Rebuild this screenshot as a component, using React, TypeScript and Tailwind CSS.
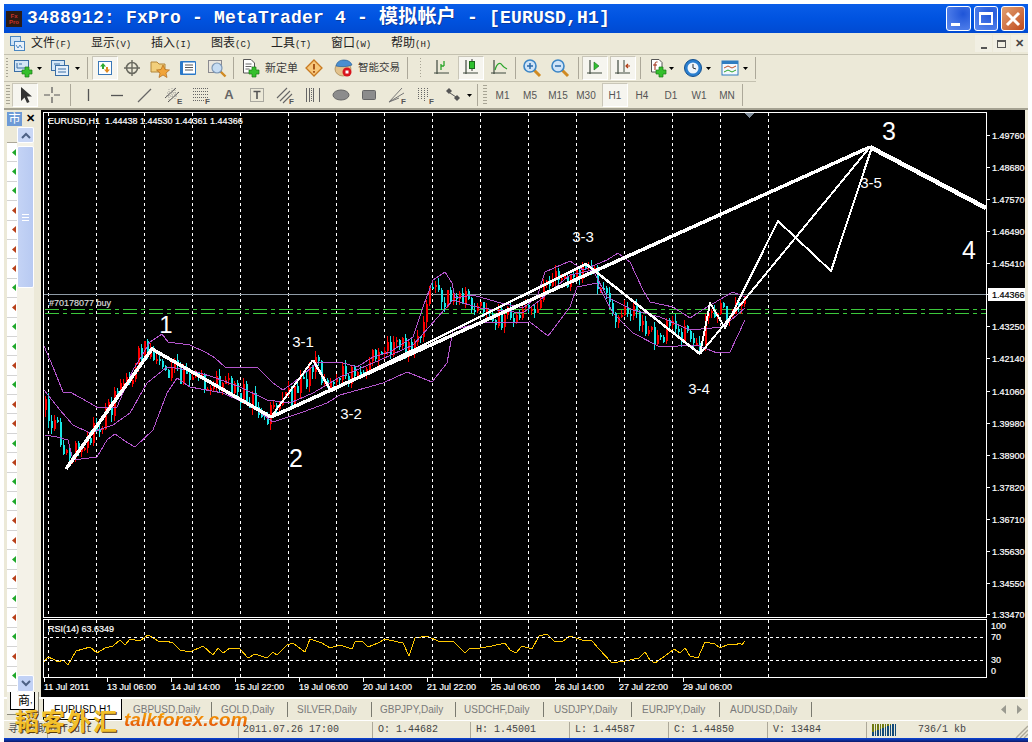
import type { ReactNode } from "react";

type Pt = [number, number];

const toPoints = (pts: Pt[]) => pts.map((p) => p.join(",")).join(" ");

const anchors: Pt[] = [
  [45, 410], [55, 425], [66, 458], [80, 440], [100, 425], [115, 400], [130, 380], [140, 352], [152, 350],
  [165, 365], [180, 375], [190, 385], [210, 378], [230, 385], [250, 400], [270, 415], [285, 400], [300, 385],
  [313, 365], [325, 380], [340, 378], [360, 365], [390, 350], [410, 345], [418, 335], [425, 305], [432, 292],
  [445, 300], [455, 305], [465, 300], [480, 312], [500, 318], [520, 316], [535, 312], [550, 278], [570, 285],
  [586, 272], [600, 280], [610, 310], [625, 315], [640, 318], [655, 342], [670, 325], [690, 340], [700, 350],
  [708, 310], [720, 312], [735, 310], [745, 295],
];

const upperBand: Pt[] = [
  [44, 346], [53, 367], [63, 392], [70, 392], [90, 403], [98, 408], [117, 407], [133, 370], [150, 342], [162, 334],
  [168, 342], [190, 345], [207, 353], [215, 358], [225, 367], [240, 368], [257, 367], [273, 383], [283, 390],
  [293, 383], [317, 363], [340, 362], [357, 367], [373, 357], [390, 352], [413, 337], [423, 307], [433, 280],
  [445, 272], [452, 283], [455, 298], [473, 295], [497, 302], [523, 308], [537, 297], [545, 272], [570, 261],
  [583, 270], [607, 260], [618, 253], [630, 262], [643, 290], [650, 302], [673, 307], [690, 318], [707, 307],
  [733, 292], [745, 297],
];

const midBand: Pt[] = [
  [44, 390], [60, 410], [73, 425], [90, 433], [113, 425], [130, 413], [147, 383], [167, 367], [190, 370], [213, 377],
  [240, 387], [267, 400], [290, 403], [313, 393], [340, 377], [380, 360], [413, 345], [453, 300], [480, 308],
  [523, 313], [540, 300], [570, 275], [593, 270], [607, 297], [633, 310], [660, 317], [690, 330], [723, 327], [745, 308],
];

const lowerBand: Pt[] = [
  [45, 435], [57, 437], [68, 440], [73, 460], [97, 457], [107, 440], [115, 434], [128, 443], [135, 447], [153, 430],
  [167, 393], [177, 378], [190, 387], [223, 393], [253, 407], [273, 422], [303, 412], [327, 403], [340, 395],
  [383, 383], [407, 372], [432, 382], [447, 363], [453, 330], [480, 323], [530, 322], [548, 336], [570, 307],
  [577, 287], [597, 283], [613, 313], [633, 333], [660, 347], [697, 345], [717, 353], [730, 352], [745, 320],
];

const rsiLine: Pt[] = [
  [44, 662], [48, 657], [53, 659], [58, 662], [63, 660], [68, 665], [76, 651], [90, 647], [97, 653], [105, 648], [113, 646],
  [120, 640], [125, 645], [130, 639], [140, 641], [148, 635], [160, 642], [166, 641], [173, 643], [180, 650], [190, 652],
  [203, 646], [213, 655], [218, 648], [223, 653], [230, 648], [240, 649], [248, 658], [255, 654], [267, 658], [273, 652],
  [277, 655], [287, 645], [293, 643], [305, 652], [310, 639], [322, 643], [330, 648], [340, 645], [352, 649], [355, 642],
  [362, 641], [368, 647], [378, 643], [385, 639], [398, 642], [403, 643], [409, 656], [415, 638], [427, 636], [440, 642],
  [453, 641], [465, 653], [470, 648], [480, 648], [492, 646], [505, 643], [510, 650], [516, 653], [522, 646], [532, 649],
  [539, 636], [547, 634], [554, 641], [562, 642], [570, 636], [582, 640], [592, 641], [599, 649], [612, 663], [625, 661],
  [639, 658], [645, 652], [650, 660], [655, 663], [669, 653], [674, 649], [680, 653], [685, 648], [690, 656], [698, 658],
  [705, 642], [715, 644], [720, 648], [729, 644], [735, 645], [740, 643], [742, 645], [745, 641],
];

const priceLabels: [string, number][] = [
  ["1.49760", 135], ["1.48680", 167], ["1.47570", 199], ["1.46490", 231], ["1.45410", 263], ["1.43250", 326],
  ["1.42140", 358], ["1.41060", 391], ["1.39980", 423], ["1.38900", 455], ["1.37820", 487], ["1.36710", 519],
  ["1.35630", 551], ["1.34550", 583], ["1.33470", 614],
];

const timeLabels: [string, number][] = [
  ["11 Jul 2011", 44], ["13 Jul 06:00", 107], ["14 Jul 14:00", 171], ["15 Jul 22:00", 235], ["19 Jul 06:00", 299],
  ["20 Jul 14:00", 363], ["21 Jul 22:00", 427], ["25 Jul 06:00", 491], ["26 Jul 14:00", 555], ["27 Jul 22:00", 619],
  ["29 Jul 06:00", 683],
];

const waveLabels: [string, number, number, number][] = [
  ["1", 166, 333, 24], ["2", 296, 467, 25], ["3", 889, 140, 25], ["4", 969, 259, 25], ["3-1", 303, 347, 15],
  ["3-2", 351, 419, 15], ["3-3", 583, 242, 15], ["3-4", 699, 394, 15], ["3-5", 871, 188, 15],
];

const gridX = Array.from({ length: 16 }, (_, i) => 48.5 + i * 48);

function anchorAt(x: number) {
  for (let i = 1; i < anchors.length; i++) {
    if (x <= anchors[i][0]) {
      const [x0, y0] = anchors[i - 1];
      const [x1, y1] = anchors[i];
      return y0 + ((y1 - y0) * (x - x0)) / (x1 - x0);
    }
  }
  return anchors[anchors.length - 1][1];
}

function buildBars() {
  let seed = 41;
  const rnd = () => {
    seed = (seed * 16807) % 2147483647;
    return seed / 2147483647;
  };
  const bars = [];
  let open = anchorAt(45);
  for (let x = 45; x <= 745; x += 3) {
    const close = anchorAt(x) + (rnd() - 0.5) * 22;
    const top = Math.min(open, close);
    const bottom = Math.max(open, close);
    bars.push({
      x,
      top: Math.round(top),
      height: Math.max(2, Math.round(bottom - top)),
      wickTop: Math.round(top - rnd() * 7),
      wickBottom: Math.round(bottom + rnd() * 7),
      up: close < open,
    });
    open = close;
  }
  return bars;
}

const bars = buildBars();

function Chart() {
  return (
    <svg width={984} height={587} viewBox="41 110 984 587" className="block" shapeRendering="crispEdges">
      <rect x={41} y={110} width={984} height={587} fill="#000" />
      <rect x={43.5} y={112.5} width={943} height={505} fill="none" stroke="#fff" />
      <rect x={43.5} y={619.5} width={943} height={58} fill="none" stroke="#fff" />

      {gridX.map((x) => (
        <g key={x}>
          <line x1={x} x2={x} y1={113} y2={617} stroke="#fff" strokeDasharray="3 3" />
          <line x1={x} x2={x} y1={620} y2={677} stroke="#fff" strokeDasharray="3 3" />
        </g>
      ))}

      <line x1={44} x2={986} y1={294.5} y2={294.5} stroke="#8f9ba6" />
      <line x1={45} x2={986} y1={309.5} y2={309.5} stroke="#3cc83c" strokeDasharray="14 4 4 4" />
      <line x1={45} x2={986} y1={313.5} y2={313.5} stroke="#3cc83c" strokeDasharray="14 4 4 4" />
      <polygon points="744,113 754,113 749,118" fill="#7f8c99" />

      {bars.map((b) => (
        <g key={b.x} fill={b.up ? "#ff0000" : "#19e6e6"}>
          <rect x={b.x} y={b.wickTop} width={1} height={b.wickBottom - b.wickTop} />
          <rect x={b.x} y={b.top} width={2} height={b.height} />
        </g>
      ))}

      <g fill="none" stroke="#b455cc">
        <polyline points={toPoints(upperBand)} />
        <polyline points={toPoints(midBand)} />
        <polyline points={toPoints(lowerBand)} />
      </g>

      <g fill="none" stroke="#fff" strokeLinejoin="round">
        <polyline points="66,469 152,349 271,417" strokeWidth={3.5} />
        <polyline points="271,417 870,147" strokeWidth={3.5} />
        <polyline points="870,147 986,208" strokeWidth={4.5} />
        <polyline points="271,417 313,360" strokeWidth={2} />
        <polyline points="313,360 331,391 586,264 700,354" strokeWidth={2.5} />
        <polyline points="700,354 710,303 725,328 778,221 831,271 872,147" strokeWidth={2} />
        <polyline points="700,354 870,147" strokeWidth={2} />
      </g>

      <polyline points={toPoints(rsiLine)} fill="none" stroke="#ffc800" />

      <line x1={44} x2={986} y1={637.5} y2={637.5} stroke="#fff" strokeDasharray="3 3" />
      <line x1={44} x2={986} y1={660.5} y2={660.5} stroke="#fff" strokeDasharray="3 3" />

      <g fill="#fff" stroke="#fff" strokeWidth={0.2} fontSize={9} shapeRendering="auto">
        <text x={48} y={124}>EURUSD,H1&#160;&#160;1.44438 1.44530 1.44361 1.44366</text>
        <text x={49} y={306} fill="#d8d8d8" stroke="#d8d8d8">#70178077 buy</text>
        <text x={48} y={632}>RSI(14) 63.6349</text>
        {priceLabels.map(([label, y]) => (
          <g key={label}>
            <text x={992} y={y + 3.5}>{label}</text>
            <rect x={986} y={y} width={4} height={1} stroke="none" />
          </g>
        ))}
        <rect x={988} y={288} width={37} height={13} stroke="none" />
        <rect x={986} y={294} width={4} height={1} stroke="none" />
        <text x={992} y={297.5} fill="#000" stroke="#000">1.44366</text>
        <text x={991} y={629}>100</text>
        <text x={991} y={640}>70</text>
        <text x={991} y={663}>30</text>
        <text x={991} y={674}>0</text>
        {timeLabels.map(([label, x]) => (
          <g key={label}>
            <text x={x} y={690}>{label}</text>
            <rect x={x} y={678} width={1} height={4} stroke="none" />
          </g>
        ))}
      </g>

      <g fill="#fff" textAnchor="middle" shapeRendering="auto">
        {waveLabels.map(([label, x, y, size]) => (
          <text key={label} x={x} y={y} fontSize={size}>{label}</text>
        ))}
      </g>
    </svg>
  );
}

function Cell({ className = "", children }: { className?: string; children?: ReactNode }) {
  return <div className={`flex h-full shrink-0 items-center justify-center ${className}`}>{children}</div>;
}

function Pressed({ className = "", children }: { className?: string; children: ReactNode }) {
  return (
    <div className={`flex h-[24px] w-[26px] shrink-0 items-center justify-center border border-[#c9c6b8] border-r-white border-b-white bg-[#f6f5ef] ${className}`}>
      {children}
    </div>
  );
}

function Sep({ className = "" }: { className?: string }) {
  return <div className={`h-[22px] w-px shrink-0 bg-[#aca899] ${className}`} />;
}

function Grip({ className = "" }: { className?: string }) {
  return <div className={`h-[20px] shrink-0 border-x-2 border-transparent bg-[repeating-linear-gradient(to_bottom,#a8a595_0,#a8a595_1px,transparent_1px,transparent_3px)] bg-clip-content ${className}`} />;
}

function Drop({ className = "" }: { className?: string }) {
  return (
    <Cell className={className}>
      <svg width={5} height={3} viewBox="0 0 5 3"><polygon points="0,0 5,0 2.5,3" fill="#000" /></svg>
    </Cell>
  );
}

function Ico({ w = 20, h = 20, children }: { w?: number; h?: number; children: ReactNode }) {
  return <svg width={w} height={h} viewBox={`0 0 ${w} ${h}`}>{children}</svg>;
}

function GreenPlus({ x, y }: { x: number; y: number }) {
  return <path d={`M${x + 3} ${y}h4v3h3v4h-3v3h-4v-3h-3v-4h3z`} fill="#35c02c" stroke="#1c7a18" strokeWidth={0.7} />;
}

const Axes = () => <path d="M5 2V16M2 15H17" stroke="#3f4a3f" strokeWidth={1.2} fill="none" />;

function Magnifier({ sign }: { sign: "+" | "-" }) {
  return (
    <Ico>
      <path d="M12 12L18 18" stroke="#d08a22" strokeWidth={3} />
      <circle cx={8} cy={8} r={6} fill="#cfe4f8" stroke="#3c86c6" strokeWidth={1.6} />
      <path d={sign === "+" ? "M5 8H11M8 5V11" : "M5 8H11"} stroke="#2b6aa8" strokeWidth={1.5} />
    </Ico>
  );
}

function Toolbar1() {
  return (
    <div className="flex h-[28px] border-t border-[#c4c1b0] bg-[#ece9d8]">
      <div className="flex h-full w-[752px] items-center border-b border-[#c4c1b0]">
        <Grip className="w-[6px]" />
        <Cell className="w-[26px]">
          <Ico>
            <rect x={1.5} y={2.5} width={14} height={11} fill="#d4e6f6" stroke="#3a6ea5" />
            <path d="M4 5V10H12M6 6h3" stroke="#3a6ea5" fill="none" />
            <GreenPlus x={9} y={9} />
          </Ico>
        </Cell>
        <Drop className="w-[7px]" />
        <Cell className="ml-[3px] w-[28px]">
          <Ico>
            <rect x={1.5} y={2.5} width={13} height={10} fill="#d4e6f6" stroke="#3a6ea5" />
            <rect x={5.5} y={7.5} width={13} height={10} fill="#e6f0fa" stroke="#3a6ea5" />
            <path d="M8 11H16M8 14H16M4 6h6" stroke="#3a6ea5" />
          </Ico>
        </Cell>
        <Drop className="w-[6px]" />
        <Sep className="ml-[7px]" />
        <Pressed className="ml-[4px]">
          <Ico w={16} h={16}>
            <rect x={1.5} y={1.5} width={13} height={13} fill="#fff" stroke="#3a78b8" />
            <path d="M6 3L9 6.5H7V9H5V6.5H3z" fill="#2faa2f" />
            <path d="M10 13L7 9.5H9V7H11V9.5H13z" fill="#e08a20" />
          </Ico>
        </Pressed>
        <Cell className="w-[28px]">
          <Ico>
            <circle cx={10} cy={10} r={5.5} fill="none" stroke="#6a6a60" strokeWidth={1.6} />
            <path d="M10 2V18M2 10H18" stroke="#6a6a60" strokeWidth={1.4} />
          </Ico>
        </Cell>
        <Cell className="w-[28px]">
          <Ico>
            <path d="M1 4H7L9 6H15V14H1z" fill="#f2cf7c" stroke="#b4873a" />
            <path d="M13 7L15 11.5L19.5 12L16 15L17 19.5L13 17L9 19.5L10 15L6.5 12L11 11.5z" fill="#f0a43a" stroke="#b06a1c" strokeWidth={0.7} />
          </Ico>
        </Cell>
        <Cell className="w-[28px]">
          <Ico>
            <rect x={2} y={3} width={16} height={14} rx={1} fill="#2a78c8" />
            <rect x={5} y={4.5} width={12} height={11} fill="#fff" />
            <path d="M7 7H15M7 9.5H15M7 12H15" stroke="#555" />
          </Ico>
        </Cell>
        <Cell className="ml-px w-[28px]">
          <Ico>
            <rect x={1.5} y={2.5} width={13} height={12} fill="#e9e6df" stroke="#8a8a90" />
            <circle cx={10} cy={10} r={5} fill="#c6dcf3" stroke="#7e98b6" strokeWidth={1.2} />
            <path d="M14 14L18.5 18.5" stroke="#d08a22" strokeWidth={2.4} />
          </Ico>
        </Cell>
        <Sep className="ml-[2px]" />
        <Cell className="w-[31px]">
          <Ico>
            <path d="M3.5 1.5H11L14.5 5V15H3.5z" fill="#fff" stroke="#555" />
            <path d="M5.5 6h6M5.5 8.5h6M5.5 11h4" stroke="#666" />
            <GreenPlus x={9} y={9} />
          </Ico>
        </Cell>
        <Cell className="w-[35px] justify-start whitespace-nowrap text-[11px] text-[#3c3c3c]">新定单</Cell>
        <Cell className="w-[28px]">
          <Ico>
            <path d="M10 2L18 10L10 18L2 10z" fill="#f7c77a" stroke="#c87a20" strokeWidth={1.3} />
            <path d="M10 6V11.5M10 13V14.8" stroke="#a04c10" strokeWidth={1.8} />
          </Ico>
        </Cell>
        <Cell className="ml-px w-[28px]">
          <Ico>
            <ellipse cx={10} cy={11} rx={8} ry={7} fill="#e3c28c" stroke="#a0814a" strokeWidth={0.7} />
            <path d="M3 8C4 3 8 2 11 2C15 2 18 4 19 7C14 9 8 9 3 8z" fill="#4a8ed0" stroke="#2c6196" strokeWidth={0.7} />
            <circle cx={14} cy={14} r={4.5} fill="#d8141c" />
            <rect x={12.5} y={12.5} width={3} height={3} fill="#fff" />
          </Ico>
        </Cell>
        <Cell className="ml-px w-[43px] justify-start whitespace-nowrap text-[10.5px] text-[#3c3c3c]">智能交易</Cell>
        <Sep className="ml-[6px]" />
        <Grip className="ml-[10px] w-[5px]" />
        <Cell className="ml-[6px] w-[26px]">
          <Ico>
            <Axes />
            <path d="M9 12V6M9 8H12M12 3V8" stroke="#2aa52a" strokeWidth={1.3} fill="none" />
          </Ico>
        </Cell>
        <Pressed className="ml-[3px]">
          <Ico>
            <Axes />
            <path d="M11 1V13" stroke="#333" />
            <rect x={8.5} y={3.5} width={5} height={7} fill="#2fc02f" stroke="#1c6a1c" />
          </Ico>
        </Pressed>
        <Cell className="ml-px w-[28px]">
          <Ico>
            <Axes />
            <path d="M6 12C8 5 11 4 13 7C14 9 16 10 18 11" stroke="#2aa52a" strokeWidth={1.3} fill="none" />
          </Ico>
        </Cell>
        <Sep className="ml-[2px]" />
        <Cell className="ml-[2px] w-[28px]"><Magnifier sign="+" /></Cell>
        <Cell className="w-[28px]"><Magnifier sign="-" /></Cell>
        <Sep className="ml-[4px]" />
        <Pressed className="ml-[3px]">
          <Ico>
            <Axes />
            <polygon points="9,4 14,8 9,12" fill="#2fc02f" stroke="#1c6a1c" strokeWidth={0.6} />
          </Ico>
        </Pressed>
        <Pressed className="ml-[2px]">
          <Ico>
            <Axes />
            <path d="M11 2V14" stroke="#3f4a3f" />
            <path d="M17 8H13M15 6L13 8L15 10" stroke="#b03a10" strokeWidth={1.2} fill="none" />
          </Ico>
        </Pressed>
        <Sep className="ml-[4px]" />
        <Cell className="ml-[4px] w-[24px]">
          <Ico>
            <path d="M4.5 1.5H12L15 4.5V14H4.5z" fill="#fff" stroke="#555" />
            <path d="M8 12V6C8 4 9 4 10.5 4M6 7H10" stroke="#a02a10" fill="none" />
            <GreenPlus x={9} y={9} />
          </Ico>
        </Cell>
        <Drop className="w-[5px]" />
        <Cell className="ml-[7px] w-[24px]">
          <Ico>
            <circle cx={10} cy={10} r={8.5} fill="#2a7fd0" stroke="#14508e" />
            <circle cx={10} cy={10} r={5.5} fill="#eef5fb" />
            <path d="M10 6V10L13 11" stroke="#333" fill="none" />
          </Ico>
        </Cell>
        <Drop className="w-[6px]" />
        <Cell className="ml-[7px] w-[24px]">
          <Ico>
            <rect x={2} y={3} width={16} height={14} fill="#f4f8fc" stroke="#2f7cc0" />
            <rect x={2} y={3} width={16} height={3} fill="#2f7cc0" />
            <path d="M4 10L8 8L12 10L16 8" stroke="#c0502a" fill="none" />
            <path d="M4 14L8 12L12 14L16 12" stroke="#2aa52a" fill="none" />
          </Ico>
        </Cell>
        <Drop className="w-[6px]" />
        <Sep className="ml-[7px]" />
      </div>
    </div>
  );
}

function LetterF({ label = "F" }: { label?: string }) {
  return <text x={14} y={19} fontSize={8} fontWeight={700} fill="#555">{label}</text>;
}

function Toolbar2() {
  const periods = ["M1", "M5", "M15", "M30"];
  return (
    <div className="flex h-[28px] items-center border-b-2 border-[#a5a292] bg-[#ece9d8]">
      <Grip className="w-[8px]" />
      <Pressed>
        <Ico w={16} h={18}>
          <path d="M4 1V15L7.5 11.5L10 17L12.5 16L10 10.5H15z" fill="#333" />
        </Ico>
      </Pressed>
      <Cell className="w-[28px]">
        <Ico><path d="M10 2V8M10 12V18M2 10H8M12 10H18" stroke="#555" strokeWidth={1.2} /></Ico>
      </Cell>
      <Sep className="ml-[4px]" />
      <Cell className="ml-[3px] w-[28px]"><Ico><path d="M10.5 4V16" stroke="#555" strokeWidth={1.3} /></Ico></Cell>
      <Cell className="ml-px w-[28px]"><Ico><path d="M4 10.5H16" stroke="#555" strokeWidth={1.3} /></Ico></Cell>
      <Cell className="w-[28px]"><Ico><path d="M3 17L16 4" stroke="#666" strokeWidth={1.2} /></Ico></Cell>
      <Cell className="w-[28px]">
        <Ico>
          <path d="M2 13L13 3M5 17L16 7" stroke="#555" />
          <path d="M4 8H15M3 11H14M6 4V16M9 3V15M12 3V14" stroke="#888" strokeWidth={0.7} strokeDasharray="1 1" />
          <LetterF label="E" />
        </Ico>
      </Cell>
      <Cell className="w-[28px]">
        <Ico>
          <path d="M2 3.5H17M2 6.5H17M2 9.5H17M2 12.5H17M2 15.5H13" stroke="#666" strokeDasharray="1 1" />
          <LetterF />
        </Ico>
      </Cell>
      <Cell className="w-[28px] text-[13px] font-bold text-[#666]">A</Cell>
      <Cell className="w-[28px]">
        <Ico>
          <rect x={3.5} y={3.5} width={13} height={13} fill="none" stroke="#666" strokeDasharray="1 1" />
          <path d="M6.5 6.5H13.5M10 6.5V14" stroke="#555" strokeWidth={1.6} />
        </Ico>
      </Cell>
      <Cell className="w-[28px]">
        <Ico>
          <path d="M2 13L12 3M5 16L15 6M8 18L17 9" stroke="#666" strokeWidth={1.1} />
          <LetterF />
        </Ico>
      </Cell>
      <Cell className="w-[28px]">
        <Ico><path d="M3.5 3V17M6.5 3V17M10.5 3V17M16.5 3V17" stroke="#666" /><path d="M8.5 3V17" stroke="#666" strokeDasharray="1 1" /></Ico>
      </Cell>
      <Cell className="w-[28px]"><Ico><ellipse cx={10} cy={10} rx={8} ry={5} fill="#8c8c8c" stroke="#666" /></Ico></Cell>
      <Cell className="w-[28px]"><Ico><rect x={3.5} y={5.5} width={13} height={9} rx={1} fill="#8c8c8c" stroke="#666" /></Ico></Cell>
      <Cell className="w-[28px]">
        <Ico>
          <path d="M2 17L15 3M2 17L17 8M2 17L12 13" stroke="#777" />
          <LetterF />
        </Ico>
      </Cell>
      <Cell className="w-[28px]">
        <Ico>
          <path d="M3.5 3V14M6.5 3V14M9.5 3V17M12.5 3V12" stroke="#666" strokeDasharray="1 1" />
          <LetterF />
        </Ico>
      </Cell>
      <Cell className="w-[28px]">
        <Ico>
          <path d="M3 6L6 3L9 6L6 9z" fill="#555" />
          <path d="M7 8L13 12" stroke="#555" />
          <path d="M11 13L14 10L17 13L14 16z" fill="#555" />
        </Ico>
      </Cell>
      <Drop className="w-[5px]" />
      <Sep className="ml-[5px]" />
      <Grip className="ml-[3px] w-[8px]" />
      {periods.map((p, i) => (
        <Cell key={p} className={i === 0 ? "w-[27px] text-[10px] text-[#555]" : "w-[28px] text-[10px] text-[#555]"}>{p}</Cell>
      ))}
      <Pressed className="ml-[2px] text-[10px] text-[#555]">H1</Pressed>
      <Cell className="w-[28px] text-[10px] text-[#555]">H4</Cell>
      <Cell className="ml-px w-[28px] text-[10px] text-[#555]">D1</Cell>
      <Cell className="w-[28px] text-[10px] text-[#555]">W1</Cell>
      <Cell className="w-[28px] text-[10px] text-[#555]">MN</Cell>
      <Sep className="ml-px" />
    </div>
  );
}

const listIcons = "gggrrrrgrggrgrrgrggrrgrgrgrgg".split("");

function ScrollChevron({ down = false }: { down?: boolean }) {
  return (
    <svg width={10} height={7} viewBox="0 0 10 7">
      <path d={down ? "M1 1L5 5L9 1" : "M1 6L5 2L9 6"} stroke="#4d6185" strokeWidth={2} fill="none" />
    </svg>
  );
}

function LeftPanel() {
  return (
    <div className="relative flex w-[37px] shrink-0 flex-col bg-[#ece9d8]">
      <div className="flex h-[17px] shrink-0 items-center pl-[3px]">
        <div className="flex h-[14px] w-[15px] items-center justify-center bg-[#6d9ad6] text-[12px] leading-none text-white">市</div>
        <span className="ml-[4px] text-[11px] font-bold leading-none text-black">✕</span>
      </div>
      <div className="ml-[3px] flex min-h-0 flex-1">
        <div className="h-[565px] w-[10px] overflow-hidden bg-white">
          <div className="h-[16px] border-b border-[#aca899] bg-[#ece9d8]" />
          {listIcons.map((c, i) => (
            <div key={i} className="flex h-[19.4px] items-center justify-end border-b border-[#d4d4d4] pr-[1px]">
              <svg width={5} height={9} viewBox="0 0 5 9">
                <path d="M5 1L1 4.5L5 8z" fill={c === "g" ? "#1fa82a" : "#b8401a"} />
              </svg>
            </div>
          ))}
        </div>
        <div className="flex h-[565px] w-[17px] flex-col bg-[#f4f2e8]">
          <div className="flex h-[16px] shrink-0 items-center justify-center rounded-[2px] border border-white bg-[#c9d7f6]">
            <ScrollChevron />
          </div>
          <div className="mt-[3px] flex h-[142px] shrink-0 items-center justify-center rounded-[2px] border border-white bg-gradient-to-r from-[#c4d3f5] to-[#b8caf2]">
            <div className="h-[7px] w-[7px] border-y border-white bg-[linear-gradient(to_bottom,transparent_2px,#fff_2px,#fff_3px,transparent_3px)]" />
          </div>
          <div className="mt-auto flex h-[17px] shrink-0 items-center justify-center rounded-[2px] border border-white bg-[#c2d2f5]">
            <ScrollChevron down />
          </div>
        </div>
      </div>
      {/* active tab of the panel, hangs below over the tab bar */}
      <div className="absolute left-[3px] top-[582px] z-10 flex h-[23px] w-[32px] items-start border-b border-r border-[#8c8a7c] bg-[#f2f0e4] pl-[3px]">
        <div className="flex h-[18px] w-[25px] items-center overflow-hidden border-x border-b border-black bg-white pl-[7px] text-[12px] leading-none text-black">
          商<span className="text-[9px]">,</span>
        </div>
      </div>
    </div>
  );
}

const chartTabs: [string, string][] = [
  ["GBPUSD,Daily", "w-[90px] pl-[11px]"],
  ["GOLD,Daily", "w-[76px] pl-[9px]"],
  ["SILVER,Daily", "w-[84px] pl-[9px]"],
  ["GBPJPY,Daily", "w-[84px] pl-[8px]"],
  ["USDCHF,Daily", "w-[88px] pl-[8px]"],
  ["USDJPY,Daily", "w-[88px] pl-[10px]"],
  ["EURJPY,Daily", "w-[88px] pl-[10px]"],
  ["AUDUSD,Daily", "w-[92px] pl-[10px]"],
];

const statusCells: [string, string][] = [
  ["寻求帮助", "w-[44px] pl-[4px]"],
  ["Default", "w-[191px] pl-[2px]"],
  ["2011.07.26 17:00", "w-[134px] pl-[4px]"],
  ["O: 1.44682", "w-[98px] pl-[5px]"],
  ["H: 1.45001", "w-[99px] pl-[5px]"],
  ["L: 1.44587", "w-[99px] pl-[5px]"],
  ["C: 1.44850", "w-[99px] pl-[5px]"],
  ["V: 13484", "w-[99px] pl-[5px]"],
];

const signalBars = [4, 5, 6, 7, 8, 9, 10, 11, 12, 12];

export default function App() {
  return (
    <div className="relative flex h-[742px] w-[1032px] flex-col overflow-hidden bg-white pt-[4px] pl-[4px] pr-[4px] font-['Liberation_Sans','Noto_Sans_CJK_SC',sans-serif]">
      {/* title bar */}
      <div className="flex h-[29px] shrink-0 items-center bg-gradient-to-b from-[#0a5de8] via-[#0053e0] to-[#004ad2]">
        <div className="ml-[2px] flex h-[16px] w-[16px] shrink-0 flex-col items-center justify-center bg-[#2a1a14] text-[6px] font-bold leading-[6px] text-[#c8322a]">
          <span>Fx</span>
          <span>Pro</span>
        </div>
        <div className="ml-[5px] whitespace-pre font-['Liberation_Mono','Noto_Sans_CJK_SC',monospace] text-[18px] font-bold tracking-[0.2px] text-white [text-shadow:1px_1px_0_#0f3a9a]">
          3488912: FxPro - MetaTrader 4 - <span className="text-[19px]">模拟帐户</span> - [EURUSD,H1]
        </div>
        <div className="ml-auto mr-[3px] flex h-[25px] gap-[3px]">
          <div className="flex w-[25px] items-end rounded-[3px] border border-white bg-[radial-gradient(circle_at_70%_30%,#1f55d8,#5f8cf0)] px-[4px] pb-[4px]">
            <div className="h-[3px] w-[9px] bg-white" />
          </div>
          <div className="flex w-[24px] items-center justify-center rounded-[3px] border border-white bg-[radial-gradient(circle_at_70%_30%,#1f55d8,#5f8cf0)]">
            <div className="h-[13px] w-[14px] border-2 border-t-[3px] border-white" />
          </div>
          <div className="flex w-[24px] items-center justify-center rounded-[3px] border border-white bg-gradient-to-br from-[#e0a070] to-[#bf4a1c]">
            <svg width={16} height={16} viewBox="0 0 16 16">
              <path d="M2 2L14 14M14 2L2 14" stroke="#fff" strokeWidth={3} />
            </svg>
          </div>
        </div>
      </div>

      {/* menu */}
      <div className="flex h-[21px] shrink-0 items-center bg-[#ece9d8] text-[12px] text-[#222]">
        <div className="flex w-[27px] shrink-0 justify-center">
          <svg width={15} height={15} viewBox="0 0 15 15">
            <rect x={0.5} y={0.5} width={10} height={9} fill="#cfe3f5" stroke="#4a86c0" />
            <rect x={4.5} y={5.5} width={10} height={9} fill="#e8f1fa" stroke="#4a86c0" />
            <path d="M6 9L8 12L10 9L12 12" stroke="#4a86c0" fill="none" />
          </svg>
        </div>
        {["文件(F)", "显示(V)", "插入(I)", "图表(C)", "工具(T)", "窗口(W)", "帮助(H)"].map((m) => (
          <span key={m} className="w-[60px] shrink-0">
            {m.slice(0, 2)}
            <span className="font-['Liberation_Mono',monospace] text-[9px]">{m.slice(2)}</span>
          </span>
        ))}
        <div className="ml-auto flex h-[17px] gap-px">
          <div className="flex w-[17px] items-end justify-center bg-[#f1efe3] pb-[3px]"><div className="h-[2px] w-[6px] bg-[#555]" /></div>
          <div className="flex w-[17px] items-center justify-center bg-[#f1efe3]"><div className="h-[8px] w-[9px] border border-t-2 border-[#555]" /></div>
          <div className="flex w-[17px] items-center justify-center bg-[#f1efe3] text-[11px] font-bold leading-none text-[#444]">✕</div>
        </div>
      </div>

      <Toolbar1 />
      <Toolbar2 />

      {/* chart + side panel */}
      <div className="flex h-[587px] shrink-0 bg-[#ece9d8]">
        <LeftPanel />
        <Chart />
      </div>

      {/* chart tabs */}
      <div className="flex h-[23px] shrink-0 items-center border-t-2 border-white bg-[#ece9d8] text-[10px] text-[#7a7a7a]">
        <div className="ml-[39px] flex h-full w-[79px] shrink-0 items-center border-x border-b border-black bg-white pl-[10px] text-black">EURUSD,H1</div>
        {chartTabs.map(([label, cls]) => (
          <div key={label} className={`flex h-[15px] shrink-0 items-center border-r border-[#7a7a70] ${cls}`}>{label}</div>
        ))}
        <div className="ml-auto mr-[6px] flex gap-[11px]">
          <svg width={5} height={9} viewBox="0 0 5 9"><polygon points="5,0 0,4.5 5,9" fill="#9a9a90" /></svg>
          <svg width={5} height={9} viewBox="0 0 5 9"><polygon points="0,0 5,4.5 0,9" fill="#9a9a90" /></svg>
        </div>
      </div>

      {/* status bar */}
      <div className="flex h-[18px] shrink-0 items-center border-t border-white bg-[#ece9d8] font-['Liberation_Mono','Noto_Sans_CJK_SC',monospace] text-[10px] text-[#444]">
        {statusCells.map(([label, cls]) => (
          <div key={label} className={`flex h-[16px] shrink-0 items-center overflow-hidden whitespace-nowrap border-r border-[#aca899] ${cls}`}>{label}</div>
        ))}
        <div className="ml-[5px] flex h-[12px] w-[24px] shrink-0 items-end gap-px">
          {signalBars.map((h, i) => (
            <div key={i} className="flex h-full w-[1.5px] flex-col justify-end bg-[#6e7a10]">
              <div className="bg-[#124a78]" style={{ height: h }} />
            </div>
          ))}
        </div>
        <span className="ml-[22px]">736/1 kb</span>
        <svg width={13} height={13} viewBox="0 0 13 13" className="ml-auto self-end">
          <path d="M13 1L1 13M13 5L5 13M13 9L9 13" stroke="#aca899" strokeWidth={1.4} />
        </svg>
      </div>

      {/* window bottom edge */}
      <div className="h-[4px] shrink-0 bg-gradient-to-b from-[#0a46d8] to-[#0a1a6a]" />

      {/* site watermark over the status bar */}
      <div className="absolute left-[15px] top-[708px] z-20 flex items-end whitespace-nowrap leading-none">
        <span className="font-['Noto_Sans_CJK_SC',sans-serif] text-[24px] font-bold tracking-[2px] text-[#f2c02c] [text-shadow:1px_1px_0_#5a3a08]">韬客外汇</span>
        <span className="mb-[3px] ml-[5px] bg-gradient-to-b from-[#f7b000] to-[#e0400a] bg-clip-text pr-[2px] text-[19px] font-bold italic text-transparent">talkforex.com</span>
      </div>
    </div>
  );
}
